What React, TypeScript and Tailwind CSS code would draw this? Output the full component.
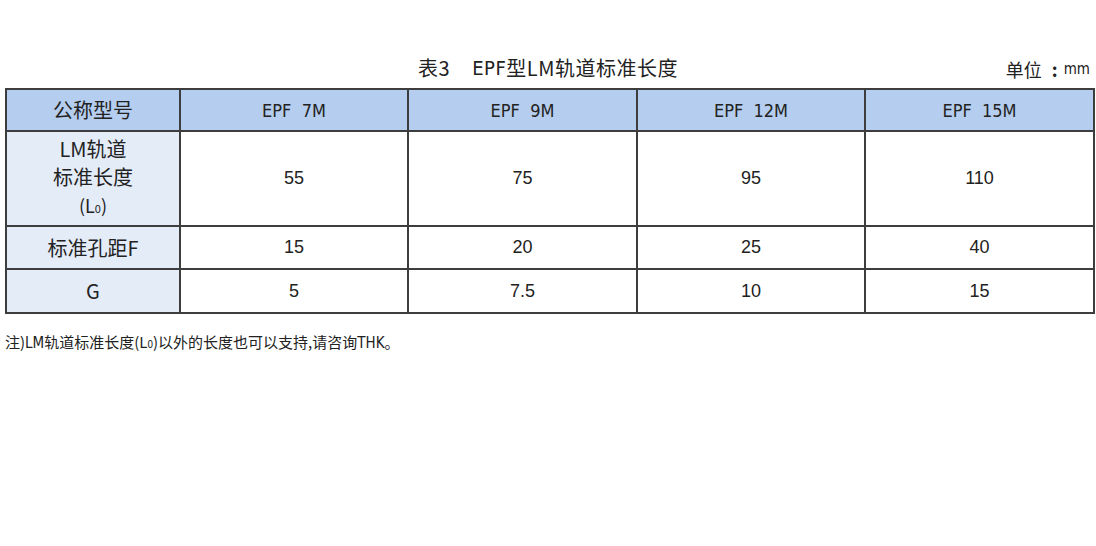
const cols = ["EPF  7M", "EPF  9M", "EPF  12M", "EPF  15M"];

const rows: { label: React.ReactNode; values: string[]; h: string }[] = [
  {
    label: (
      <div className="leading-[28px]">
        <div>LM轨道</div>
        <div>标准长度</div>
        <div className="text-[18px]">
          (L<span className="text-[11px]">0</span>)
        </div>
      </div>
    ),
    values: ["55", "75", "95", "110"],
    h: "h-[95px]",
  },
  { label: "标准孔距F", values: ["15", "20", "25", "40"], h: "h-[43px]" },
  { label: "G", values: ["5", "7.5", "10", "15"], h: "h-[44px]" },
];

const cjk = { fontFamily: '"Noto Sans CJK SC", "DejaVu Sans Condensed", sans-serif' };
const num = { fontFamily: '"Liberation Sans", Arial, sans-serif' };
const cond = { fontFamily: '"DejaVu Sans Condensed", "Liberation Sans Narrow", "Noto Sans CJK SC", sans-serif' };

export default function App() {
  return (
    <div className="w-[1096px] h-[546px] bg-white text-[#222]" style={cjk}>
      <div className="relative h-[88px] pt-[52px] px-[5px]">
        <div className="flex justify-center items-center text-[20px] leading-[32px] tracking-[0.5px]">
          <span>表3</span>
          <span className="ml-[22px]" style={cond}>
            EPF
          </span>
          <span>型LM轨道标准长度</span>
        </div>
        <div className="absolute right-[6px] top-[55px] text-[18px] leading-[28px] flex items-center">
          <span>单位</span>
          <span className="ml-[10px] mr-[6px] font-bold">:</span>
          <span className="text-[15px]" style={cond}>mm</span>
        </div>
      </div>
      <div className="px-[5px]">
        <table className="w-[1088px] border-collapse table-fixed">
          <colgroup>
            <col className="w-[174px]" />
            <col className="w-[228px]" />
            <col className="w-[229px]" />
            <col className="w-[228px]" />
            <col className="w-[229px]" />
          </colgroup>
          <thead>
            <tr className="h-[42px] bg-[#b5cdee]">
              <th className="border-2 border-[#3d3d3d] font-normal text-[20px]">公称型号</th>
              {cols.map((c) => (
                <th
                  key={c}
                  className="border-2 border-[#3d3d3d] font-normal text-[18px] whitespace-pre"
                  style={cond}
                >
                  {c}
                </th>
              ))}
            </tr>
          </thead>
          <tbody>
            {rows.map((r, i) => (
              <tr key={i} className={r.h}>
                <td className="border-2 border-[#3d3d3d] bg-[#e4ecf8] text-center text-[20px]">
                  {r.label}
                </td>
                {r.values.map((v, j) => (
                  <td
                    key={j}
                    className="border-2 border-[#3d3d3d] text-center text-[18px]"
                    style={num}
                  >
                    {v}
                  </td>
                ))}
              </tr>
            ))}
          </tbody>
        </table>
        <div className="mt-[16px] text-[15px] leading-[24px]">
          注)<span style={cond}>LM</span>轨道标准长度(L<span className="text-[10px]">0</span>)以外的长度也可以支持,请咨询<span style={cond}>THK</span>。
        </div>
      </div>
    </div>
  );
}
